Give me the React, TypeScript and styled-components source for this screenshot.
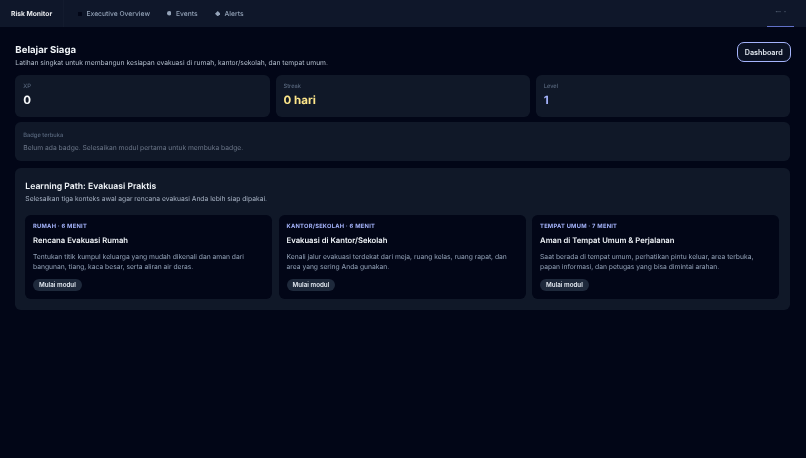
import React from 'react';
import styled, { createGlobalStyle } from 'styled-components';

const GlobalStyle = createGlobalStyle`
  html, body {
    margin: 0;
    padding: 0;
    background: #020617;
  }
  body {
    font-family: Inter, "Liberation Sans", sans-serif;
    text-rendering: geometricPrecision;
  }
  * {
    box-sizing: border-box;
  }
`;

const Page = styled.div`
  width: 806px;
  height: 458px;
  overflow: hidden;
  background: #020617;
  filter: blur(0.25px);
`;

const TopBar = styled.header`
  height: 27px;
  display: flex;
  align-items: center;
  padding: 0 12px 0 11px;
  background: #0f172a;
`;

const Brand = styled.div`
  align-self: stretch;
  width: 53px;
  display: flex;
  align-items: center;
  font-size: 6.72px;
  font-weight: 700;
  color: #e5e7eb;
  border-right: 1px solid rgba(148, 163, 184, 0.03);
`;

const Nav = styled.nav`
  display: flex;
  align-items: center;
  gap: 17px;
  flex: 1;
  margin-left: 14px;
`;

const NavItem = styled.div`
  display: flex;
  align-items: center;
  gap: 4.5px;
  font-size: 6.72px;
  font-weight: 500;
  color: #94a3b8;
`;

const NavIcon = styled.svg<{ $size: number }>`
  width: ${({ $size }) => $size}px;
  height: ${({ $size }) => $size}px;
  display: block;
`;

const MoreTab = styled.div`
  align-self: stretch;
  width: 27px;
  display: flex;
  align-items: center;
  justify-content: center;
  gap: 3px;
  padding-bottom: 2px;
  border-bottom: 1px solid #6170c8;
  color: #94a3b8;
  font-size: 6.72px;
  line-height: 1;
`;

const Main = styled.main`
  padding: 15.36px 15.8px 0 15.36px;
  display: flex;
  flex-direction: column;
`;

const Heading = styled.div`
  display: flex;
  align-items: flex-start;
  justify-content: space-between;
  height: 32.6px;
`;

const TitleBlock = styled.div`
  padding-top: 2px;
`;

const Title = styled.h1`
  margin: 0;
  font-size: 9.6px;
  line-height: 14px;
  font-weight: 700;
  color: #f1f5f9;
`;

const Subtitle = styled.p`
  margin: 0;
  font-size: 6.72px;
  line-height: 10px;
  color: #b4bfce;
`;

const DashboardButton = styled.button`
  width: 54px;
  height: 20px;
  margin-right: -0.5px;
  padding: 0;
  font-family: inherit;
  font-size: 7.2px;
  font-weight: 600;
  color: #e2e8f0;
  background: #0b1224;
  border: 1.7px solid #a5b4fc;
  border-radius: 7px;
`;

const StatsRow = styled.section`
  display: grid;
  grid-template-columns: repeat(3, 1fr);
  gap: 5.76px;
`;

const Panel = styled.div`
  background: #101828;
  border-radius: 5.76px;
`;

const StatCard = styled(Panel)`
  height: 42px;
  padding: 8.5px 8px 0;
`;

const SmallLabel = styled.div`
  font-size: 5.76px;
  line-height: 8px;
  color: #64748b;
`;

const StatValue = styled.div<{ $tone: string }>`
  margin-top: 2px;
  font-size: 11.52px;
  line-height: 15px;
  font-weight: 700;
  color: ${({ $tone }) => $tone};
`;

const BadgeCard = styled(Panel)`
  margin-top: 5px;
  height: 39px;
  padding: 10px 8px 0;
`;

const BadgeNote = styled.div`
  margin-top: 3px;
  font-size: 6.72px;
  line-height: 10px;
  color: #6b7688;
`;

const PathSection = styled(Panel)`
  margin-top: 7px;
  height: 142px;
  padding: 13px 11px 11px 10px;
`;

const PathTitle = styled.h2`
  margin: 0;
  font-size: 8.64px;
  line-height: 13px;
  font-weight: 600;
  color: #f1f5f9;
`;

const PathSubtitle = styled.p`
  margin: 0.5px 0 0;
  font-size: 6.72px;
  line-height: 10px;
  color: #a8b3c4;
`;

const ModuleGrid = styled.div`
  margin-top: 10.5px;
  display: grid;
  grid-template-columns: repeat(3, 1fr);
  gap: 6.72px;
`;

const ModuleCard = styled.article`
  height: 84.5px;
  padding: 8.5px 7.68px 0;
  background: #020617;
  border-radius: 5.76px;
`;

const ModuleMeta = styled.div`
  font-size: 5.76px;
  line-height: 8px;
  font-weight: 700;
  letter-spacing: 0.24px;
  color: #a5b4fc;
`;

const ModuleTitle = styled.h3`
  margin: 3.5px 0 0;
  font-size: 7.68px;
  line-height: 11px;
  font-weight: 600;
  color: #f1f5f9;
`;

const ModuleText = styled.p`
  margin: 6px 0 0;
  font-size: 6.72px;
  line-height: 10px;
  color: #94a3b8;
`;

const StartButton = styled.button`
  display: block;
  margin-top: 7px;
  height: 12.5px;
  padding: 0 6px;
  font-family: inherit;
  font-size: 6.24px;
  font-weight: 600;
  color: #e2e8f0;
  background: #1e293b;
  border: none;
  border-radius: 6.25px;
`;

const modules = [
  {
    meta: 'RUMAH · 6 MENIT',
    title: 'Rencana Evakuasi Rumah',
    text: 'Tentukan titik kumpul keluarga yang mudah dikenali dan aman dari bangunan, tiang, kaca besar, serta aliran air deras.',
  },
  {
    meta: 'KANTOR/SEKOLAH · 6 MENIT',
    title: 'Evakuasi di Kantor/Sekolah',
    text: 'Kenali jalur evakuasi terdekat dari meja, ruang kelas, ruang rapat, dan area yang sering Anda gunakan.',
  },
  {
    meta: 'TEMPAT UMUM · 7 MENIT',
    title: 'Aman di Tempat Umum & Perjalanan',
    text: 'Saat berada di tempat umum, perhatikan pintu keluar, area terbuka, papan informasi, dan petugas yang bisa dimintai arahan.',
  },
];

const App: React.FC = () => {
  return (
    <Page>
      <GlobalStyle />
      <TopBar>
        <Brand>Risk Monitor</Brand>
        <Nav>
          <NavItem>
            <NavIcon $size={4} viewBox="0 0 10 10">
              <rect x="0" y="0" width="10" height="10" fill="#020617" />
            </NavIcon>
            Executive Overview
          </NavItem>
          <NavItem>
            <NavIcon $size={4.5} viewBox="0 0 10 10">
              <circle cx="5" cy="5" r="5" fill="#94a3b8" />
            </NavIcon>
            Events
          </NavItem>
          <NavItem>
            <NavIcon $size={5.5} viewBox="0 0 10 10">
              <path d="M5 0 L10 5 L5 10 L0 5 Z" fill="#94a3b8" />
            </NavIcon>
            Alerts
          </NavItem>
        </Nav>
        <MoreTab>
          <span>···</span>
          <span>·</span>
        </MoreTab>
      </TopBar>
      <Main>
        <Heading>
          <TitleBlock>
            <Title>Belajar Siaga</Title>
            <Subtitle>Latihan singkat untuk membangun kesiapan evakuasi di rumah, kantor/sekolah, dan tempat umum.</Subtitle>
          </TitleBlock>
          <DashboardButton>Dashboard</DashboardButton>
        </Heading>
        <StatsRow>
          <StatCard>
            <SmallLabel>XP</SmallLabel>
            <StatValue $tone="#f8fafc">0</StatValue>
          </StatCard>
          <StatCard>
            <SmallLabel>Streak</SmallLabel>
            <StatValue $tone="#fde68a">0 hari</StatValue>
          </StatCard>
          <StatCard>
            <SmallLabel>Level</SmallLabel>
            <StatValue $tone="#a5b4fc">1</StatValue>
          </StatCard>
        </StatsRow>
        <BadgeCard>
          <SmallLabel>Badge terbuka</SmallLabel>
          <BadgeNote>Belum ada badge. Selesaikan modul pertama untuk membuka badge.</BadgeNote>
        </BadgeCard>
        <PathSection>
          <PathTitle>Learning Path: Evakuasi Praktis</PathTitle>
          <PathSubtitle>Selesaikan tiga konteks awal agar rencana evakuasi Anda lebih siap dipakai.</PathSubtitle>
          <ModuleGrid>
            {modules.map((item) => (
              <ModuleCard key={item.title}>
                <ModuleMeta>{item.meta}</ModuleMeta>
                <ModuleTitle>{item.title}</ModuleTitle>
                <ModuleText>{item.text}</ModuleText>
                <StartButton>Mulai modul</StartButton>
              </ModuleCard>
            ))}
          </ModuleGrid>
        </PathSection>
      </Main>
    </Page>
  );
};

export default App;
